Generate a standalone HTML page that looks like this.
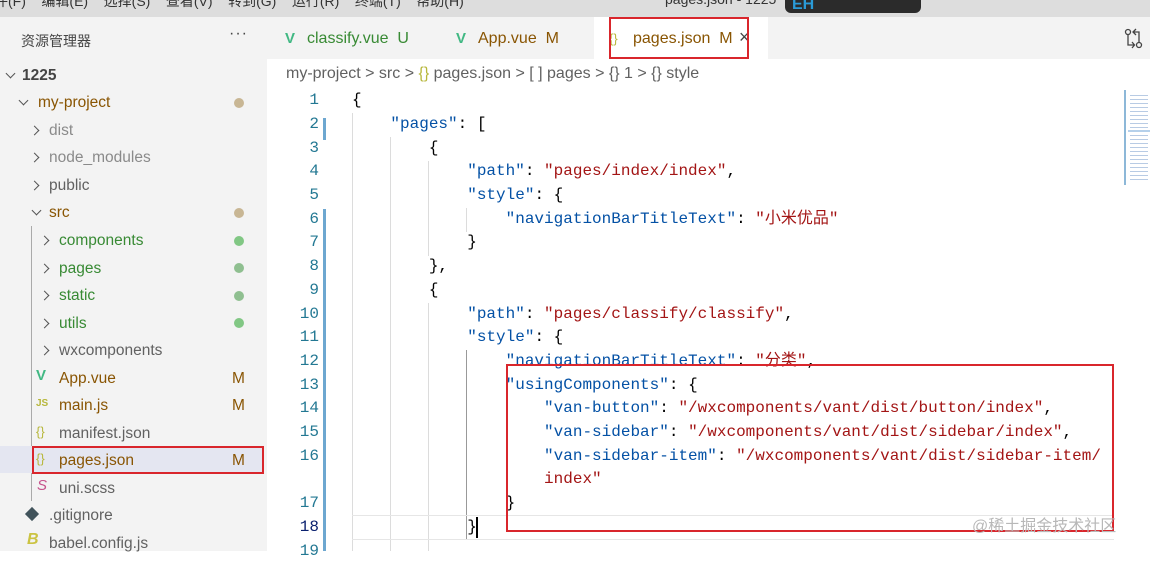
<!DOCTYPE html>
<html><head><meta charset="utf-8"><style>
*{margin:0;padding:0;box-sizing:border-box}
body{width:1150px;height:551px;overflow:hidden;position:relative;background:#fff;font-family:"Liberation Sans","Noto Sans CJK SC",sans-serif}
.a{position:absolute;white-space:pre}
#title{position:absolute;left:0;top:0;width:1150px;height:17px;background:#dddddd;overflow:hidden}
#side{position:absolute;left:0;top:17px;width:267px;height:534px;background:#f3f3f3}
#tabs{position:absolute;left:267px;top:17px;width:883px;height:42px;background:#f3f3f3}
.row{position:absolute;font-size:15.5px;color:#616161;line-height:20px}
.chev{position:absolute;width:7px;height:7px;border-right:1.3px solid #555;border-bottom:1.3px solid #555}
.dot{position:absolute;left:234px;width:10px;height:10px;border-radius:50%}
.code{position:absolute;left:270px;font-family:"Liberation Mono","Noto Sans CJK SC",monospace;font-size:16px;line-height:23.7px;height:23.7px;white-space:pre;color:#000}
.ln{display:inline-block;width:49px;text-align:right;color:#237893;margin-right:33px}
.k{color:#0451a5}.s{color:#a31515}
.g{position:absolute;width:1px;background:#dcdcdc}
.rb{position:absolute;border:2px solid #d9262c}
</style></head><body>
<div id="title">
<div class="a" style="left:-6px;top:-9px;font-size:14px;color:#333;word-spacing:0">件(F)&nbsp;&nbsp;&nbsp;&nbsp;编辑(E)&nbsp;&nbsp;&nbsp;&nbsp;选择(S)&nbsp;&nbsp;&nbsp;&nbsp;查看(V)&nbsp;&nbsp;&nbsp;&nbsp;转到(G)&nbsp;&nbsp;&nbsp;&nbsp;运行(R)&nbsp;&nbsp;&nbsp;&nbsp;终端(T)&nbsp;&nbsp;&nbsp;&nbsp;帮助(H)</div>
<div class="a" style="left:665px;top:-9px;font-size:14px;color:#333">pages.json - 1225</div>
<div class="a" style="left:785px;top:0;width:136px;height:13px;background:#2b2b2b;border-radius:0 0 6px 6px"></div>
<div class="a" style="left:792px;top:-4px;font-size:16px;color:#2a9ad6;font-weight:bold">EH</div>
</div>
<div id="side">
<div class="a" style="left:21px;top:14px;font-size:14px;color:#444">资源管理器</div>
<div class="a" style="left:229px;top:8px;font-size:16px;color:#444;letter-spacing:1px">···</div>
</div>
<div class="chev" style="left:7px;top:70px;transform:rotate(45deg)"></div>
<div class="row" style="left:22px;top:66px;font-weight:bold;color:#444">1225</div>
<div class="chev" style="left:20px;top:97px;transform:rotate(45deg)"></div>
<div class="row" style="left:38px;top:93px;color:#895503">my-project</div><div class="dot" style="top:98px;background:#c8b694"></div>
<div class="chev" style="left:31px;top:127px;transform:rotate(-45deg)"></div><div class="row" style="left:49px;top:121px;color:#8a8a8a">dist</div>
<div class="chev" style="left:31px;top:154px;transform:rotate(-45deg)"></div><div class="row" style="left:49px;top:148px;color:#8a8a8a">node_modules</div>
<div class="chev" style="left:31px;top:182px;transform:rotate(-45deg)"></div><div class="row" style="left:49px;top:176px">public</div>
<div class="chev" style="left:33px;top:207px;transform:rotate(45deg)"></div><div class="row" style="left:49px;top:203px;color:#895503">src</div><div class="dot" style="top:208px;background:#c8b694"></div>
<div class="a" style="left:31px;top:226px;width:1px;height:275px;background:#aaa"></div>
<div class="chev" style="left:41px;top:237px;transform:rotate(-45deg)"></div><div class="row" style="left:59px;top:231px;color:#388a34">components</div><div class="dot" style="top:236px;background:#81c784"></div>
<div class="chev" style="left:41px;top:265px;transform:rotate(-45deg)"></div><div class="row" style="left:59px;top:259px;color:#388a34">pages</div><div class="dot" style="top:263px;background:#8fbf90"></div>
<div class="chev" style="left:41px;top:292px;transform:rotate(-45deg)"></div><div class="row" style="left:59px;top:286px;color:#388a34">static</div><div class="dot" style="top:291px;background:#8fbf90"></div>
<div class="chev" style="left:41px;top:320px;transform:rotate(-45deg)"></div><div class="row" style="left:59px;top:314px;color:#388a34">utils</div><div class="dot" style="top:318px;background:#81c784"></div>
<div class="chev" style="left:41px;top:347px;transform:rotate(-45deg)"></div><div class="row" style="left:59px;top:341px">wxcomponents</div>
<div class="a" style="left:36px;top:367px;font-size:15px;color:#41b883;font-weight:bold">V</div><div class="row" style="left:59px;top:369px;color:#895503">App.vue</div><div class="row" style="left:232px;top:369px;color:#895503">M</div>
<div class="a" style="left:36px;top:398px;font-size:10px;color:#b7b73b;font-weight:bold">JS</div><div class="row" style="left:59px;top:396px;color:#895503">main.js</div><div class="row" style="left:232px;top:396px;color:#895503">M</div>
<div class="a" style="left:36px;top:424px;font-size:13px;color:#b7b73b">{}</div><div class="row" style="left:59px;top:424px">manifest.json</div>
<div class="a" style="left:0;top:446px;width:32px;height:27px;background:#e4e6f1"></div>
<div class="a" style="left:32px;top:446px;width:232px;height:27px;background:#e4e6f1"></div>
<div class="a" style="left:36px;top:451px;font-size:13px;color:#b7b73b">{}</div><div class="row" style="left:59px;top:451px;color:#895503">pages.json</div><div class="row" style="left:232px;top:451px;color:#895503">M</div>
<div class="rb" style="left:32px;top:446px;width:232px;height:28px"></div>
<div class="a" style="left:37px;top:477px;font-size:15px;color:#c6538c;font-style:italic">S</div><div class="row" style="left:59px;top:479px">uni.scss</div>
<div class="a" style="left:27px;top:509px;width:10px;height:10px;background:#41535b;transform:rotate(45deg)"></div><div class="row" style="left:49px;top:506px">.gitignore</div>
<div class="a" style="left:27px;top:531px;font-size:16px;color:#cbc342;font-style:italic;font-weight:bold">B</div><div class="row" style="left:49px;top:534px">babel.config.js</div>
<div id="tabs"></div>
<div class="a" style="left:594px;top:17px;width:174px;height:42px;background:#fff"></div>
<div class="a" style="left:285px;top:30px;font-size:15px;color:#41b883;font-weight:bold">V</div><div class="a" style="left:307px;top:30px;font-size:16px;color:#388a34">classify.vue&nbsp;&nbsp;U</div>
<div class="a" style="left:456px;top:30px;font-size:15px;color:#41b883;font-weight:bold">V</div><div class="a" style="left:478px;top:30px;font-size:16px;color:#895503">App.vue&nbsp;&nbsp;M</div>
<div class="a" style="left:609px;top:31px;font-size:13px;color:#b7b73b">{}</div><div class="a" style="left:633px;top:30px;font-size:16px;color:#895503">pages.json&nbsp;&nbsp;M</div>
<div class="a" style="left:739px;top:27px;font-size:18px;color:#444">×</div>
<div class="rb" style="left:609px;top:17px;width:140px;height:42px"></div>
<svg class="a" style="left:1124px;top:28px" width="20" height="22" viewBox="0 0 20 22" fill="none" stroke="#444" stroke-width="1.3"><circle cx="4" cy="4" r="2.5"/><circle cx="15" cy="17" r="2.5"/><path d="M4 6.5V17h6M8 14l2.5 3L8 20M15 14.5V4H9M12 1L9 4l3 3"/></svg>
<div class="a" style="left:286px;top:65px;font-size:16px;color:#616161">my-project &gt; src &gt; <span style="color:#b7b73b">{}</span> pages.json &gt; [ ] pages &gt; {} 1 &gt; {} style</div>
<div class="a" style="left:323px;top:118px;width:3px;height:22px;background:#6da7d0"></div>
<div class="a" style="left:323px;top:209px;width:3px;height:342px;background:#6da7d0"></div>
<div class="g" style="left:352px;top:113px;height:438px"></div>
<div class="g" style="left:390px;top:137px;height:414px"></div>
<div class="g" style="left:428px;top:161px;height:95px"></div>
<div class="g" style="left:428px;top:303px;height:248px"></div>
<div class="g" style="left:466px;top:208px;height:24px"></div>
<div class="g" style="left:466px;top:350px;height:190px;background:#999"></div>
<div class="a" style="left:352px;top:515px;width:762px;height:25px;border-top:1px solid #e6e6e6;border-bottom:1px solid #e6e6e6"></div>
<div class="a" style="left:476px;top:517px;width:2px;height:21px;background:#000"></div>
<div class="code" style="top:89.2px"><span class="ln">1</span>{</div>
<div class="code" style="top:112.9px"><span class="ln">2</span>    <span class="k">"pages"</span>: [</div>
<div class="code" style="top:136.6px"><span class="ln">3</span>        {</div>
<div class="code" style="top:160.3px"><span class="ln">4</span>            <span class="k">"path"</span>: <span class="s">"pages/index/index"</span>,</div>
<div class="code" style="top:184px"><span class="ln">5</span>            <span class="k">"style"</span>: {</div>
<div class="code" style="top:207.7px"><span class="ln">6</span>                <span class="k">"navigationBarTitleText"</span>: <span class="s">"小米优品"</span></div>
<div class="code" style="top:231.4px"><span class="ln">7</span>            }</div>
<div class="code" style="top:255.1px"><span class="ln">8</span>        },</div>
<div class="code" style="top:278.8px"><span class="ln">9</span>        {</div>
<div class="code" style="top:302.5px"><span class="ln">10</span>            <span class="k">"path"</span>: <span class="s">"pages/classify/classify"</span>,</div>
<div class="code" style="top:326.2px"><span class="ln">11</span>            <span class="k">"style"</span>: {</div>
<div class="code" style="top:349.9px"><span class="ln">12</span>                <span class="k">"navigationBarTitleText"</span>: <span class="s">"分类"</span>,</div>
<div class="code" style="top:373.6px"><span class="ln">13</span>                <span class="k">"usingComponents"</span>: {</div>
<div class="code" style="top:397.3px"><span class="ln">14</span>                    <span class="k">"van-button"</span>: <span class="s">"/wxcomponents/vant/dist/button/index"</span>,</div>
<div class="code" style="top:421px"><span class="ln">15</span>                    <span class="k">"van-sidebar"</span>: <span class="s">"/wxcomponents/vant/dist/sidebar/index"</span>,</div>
<div class="code" style="top:444.7px"><span class="ln">16</span>                    <span class="k">"van-sidebar-item"</span>: <span class="s">"/wxcomponents/vant/dist/sidebar-item/</span></div>
<div class="code" style="top:468.4px"><span class="ln"> </span>                    <span class="s">index"</span></div>
<div class="code" style="top:492.1px"><span class="ln">17</span>                }</div>
<div class="code" style="top:515.8px"><span class="ln" style="color:#0b216f">18</span>            }</div>
<div class="code" style="top:539.5px"><span class="ln">19</span></div>
<div class="rb" style="left:506px;top:364px;width:608px;height:168px"></div>
<div class="a" style="left:972px;top:512px;font-size:16px;color:#b8b8b8">@稀土掘金技术社区</div>
<div class="a" style="left:1124px;top:90px;width:2px;height:95px;background:#8db8d8"></div>
<div class="a" style="left:1130px;top:92px;width:18px;height:90px;background:repeating-linear-gradient(#fff 0 3px,#b8cbe4 3px 4px)"></div>
<div class="a" style="left:1128px;top:130px;width:22px;height:2px;background:#b5d0ea"></div>
</body></html>
